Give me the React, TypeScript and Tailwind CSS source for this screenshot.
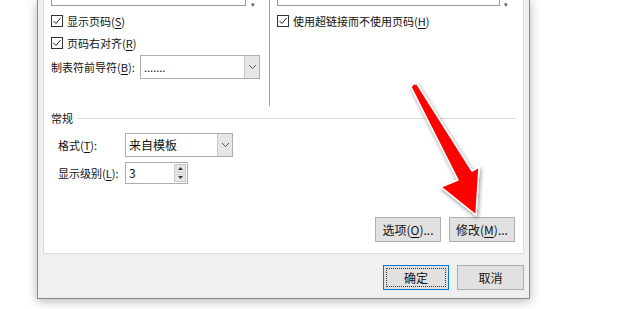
import React from "react";

const font = { fontFamily: '"Microsoft YaHei", "Noto Sans CJK SC", "Noto Sans", sans-serif' };

function Check() {
  return (
    <div className="w-[12px] h-[12px] border border-[#333] bg-white flex items-center justify-center shrink-0">
      <svg width="10" height="10" viewBox="0 0 10 10">
        <polyline points="1.5,5 4,7.5 8.5,2" fill="none" stroke="#222" strokeWidth="1" />
      </svg>
    </div>
  );
}

function Chevron() {
  return (
    <svg width="9" height="6" viewBox="0 0 9 6">
      <polyline points="1,1 4.5,4.5 8,1" fill="none" stroke="#555" strokeWidth="1" />
    </svg>
  );
}

function Select({ w, value, arrowW, big }: { w: string; value: string; arrowW: string; big?: boolean }) {
  return (
    <div className={`${w} h-[24px] border border-[#adadad] bg-white flex shrink-0`}>
      <div className={`flex-1 flex items-center pl-[3px] ${big ? "text-[12px]" : "text-[11px]"} text-[#111]`}>{value}</div>
      <div className={`${arrowW} border-l border-[#c8c8c8] bg-[#e6e6e6] flex items-center justify-center`}>
        <Chevron />
      </div>
    </div>
  );
}

function U({ c }: { c: string }) {
  return <span className="underline underline-offset-2">{c}</span>;
}

function Btn({ children, focus }: { children: React.ReactNode; focus?: boolean }) {
  return (
    <div
      className={`w-[66px] h-[25px] flex items-center justify-center text-[12px] text-[#111] bg-[#e1e1e1] border whitespace-nowrap ${
        focus ? "border-[#0078d7]" : "border-[#adadad]"
      }`}
    >
      {focus ? (
        <div className="w-[60px] h-[19px] border border-dotted border-[#333] flex items-center justify-center">
          {children}
        </div>
      ) : (
        children
      )}
    </div>
  );
}

export default function App() {
  return (
    <div className="w-[620px] h-[309px] bg-white relative overflow-hidden" style={font}>
      <div className="ml-[37px] w-[493px] h-[299px] bg-[#f0f0f0] border-x border-b border-[#8a8a8a] shadow-[0_2px_10px_rgba(0,0,0,0.3)] flex flex-col px-[5px]">
        {/* white panel */}
        <div className="h-[254px] bg-white border-x border-b border-[#dcdcdc] flex flex-col text-[11px] text-[#111] whitespace-nowrap">
          <div className="h-[106px] flex">
            {/* left column */}
            <div className="w-[225px] pl-[7px] flex flex-col">
              <div className="flex items-start">
                <div className="w-[195px] h-[6px] border-x border-b border-[#9a9a9a]" />
                <div className="ml-[5px] mt-[1px] text-[7px] leading-none text-[#555]">▾</div>
              </div>
              <div className="mt-[7px] h-[12px] flex items-center gap-[4px] leading-none">
                <Check />
                <span>
                  显示页码(<U c="S" />)
                </span>
              </div>
              <div className="mt-[10px] h-[12px] flex items-center gap-[4px] leading-none">
                <Check />
                <span>
                  页码右对齐(<U c="R" />)
                </span>
              </div>
              <div className="mt-[6px] flex items-center">
                <span className="w-[89px] shrink-0">
                  制表符前导符(<U c="B" />):
                </span>
                <Select w="w-[120px]" value="......." arrowW="w-[15px]" />
              </div>
            </div>
            <div className="w-px bg-[#a0a0a0] h-[106px]" />
            {/* right column */}
            <div className="flex-1 pl-[7px] flex flex-col">
              <div className="flex items-start">
                <div className="w-[223px] h-[6px] border-x border-b border-[#9a9a9a]" />
                <div className="ml-[4px] mt-[1px] text-[7px] leading-none text-[#555]">▾</div>
              </div>
              <div className="mt-[7px] h-[12px] flex items-center gap-[4px] leading-none">
                <Check />
                <span>
                  使用超链接而不使用页码(<U c="H" />)
                </span>
              </div>
            </div>
          </div>

          {/* 常规 */}
          <div className="mt-[4px] pl-[7px] pr-[7px] h-[16px] flex items-center">
            <span>常规</span>
            <div className="flex-1 ml-[4px] h-px bg-[#dcdcdc]" />
          </div>
          <div className="mt-[7px] pl-[14px] flex items-center">
            <span className="w-[67px] shrink-0">
              格式(<U c="T" />):
            </span>
            <Select w="w-[108px]" value="来自模板" arrowW="w-[15px]" big />
          </div>
          <div className="mt-[5px] pl-[14px] flex items-center">
            <span className="w-[67px] shrink-0">
              显示级别(<U c="L" />):
            </span>
            <div className="w-[63px] h-[22px] border border-[#adadad] bg-white flex">
              <div className="flex-1 pl-[3px] flex items-center text-[12px]">3</div>
              <div className="w-[14px] flex flex-col p-px gap-px">
                <div className="flex-1 bg-[#e6e6e6] border border-[#c8c8c8] flex items-center justify-center">
                  <svg width="5" height="3" viewBox="0 0 5 3">
                    <polygon points="0,3 2.5,0 5,3" fill="#333" />
                  </svg>
                </div>
                <div className="flex-1 bg-[#e6e6e6] border border-[#c8c8c8] flex items-center justify-center">
                  <svg width="5" height="3" viewBox="0 0 5 3">
                    <polygon points="0,0 2.5,3 5,0" fill="#333" />
                  </svg>
                </div>
              </div>
            </div>
          </div>
          <div className="mt-[33px] pr-[8px] flex justify-end gap-[8px]">
            <Btn>
              <span>
                选项(<U c="O" />)...
              </span>
            </Btn>
            <Btn>
              <span>
                修改(<U c="M" />)...
              </span>
            </Btn>
          </div>
        </div>

        {/* footer */}
        <div className="mt-[11px] flex justify-end gap-[8px]">
          <Btn focus>确定</Btn>
          <div className="w-[67px] h-[25px] flex items-center justify-center text-[12px] text-[#111] bg-[#e1e1e1] border border-[#adadad]">
            取消
          </div>
        </div>
      </div>

      {/* red arrow annotation */}
      <svg className="absolute left-0 top-0" width="620" height="309" viewBox="0 0 620 309">
        <defs>
          <filter id="sh" x="-50%" y="-50%" width="200%" height="200%">
            <feDropShadow dx="1" dy="2" stdDeviation="2" floodColor="#000" floodOpacity="0.45" />
          </filter>
        </defs>
        <polygon
          points="413,84 417,84 472,171 479,167 476,215 441,187 458,180 411,87"
          fill="#ff0000"
          stroke="#ffffff"
          strokeWidth="1.5"
          strokeLinejoin="round"
          filter="url(#sh)"
        />
      </svg>
    </div>
  );
}
